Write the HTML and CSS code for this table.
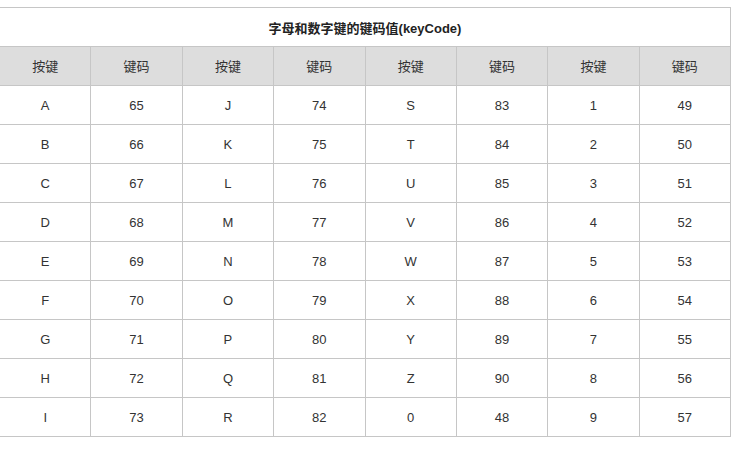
FILE: index.html
```html
<!DOCTYPE html>
<html>
<head>
<meta charset="utf-8">
<link rel="stylesheet" href="styles.css">
</head>
<body>
<table class="keys">
<thead>
<tr><th class="title" colspan="8">字母和数字键的键码值(keyCode)</th></tr>
<tr class="head"><td>按键</td><td>键码</td><td>按键</td><td>键码</td><td>按键</td><td>键码</td><td>按键</td><td>键码</td></tr>
</thead>
<tbody>
<tr><td>A</td><td>65</td><td>J</td><td>74</td><td>S</td><td>83</td><td>1</td><td>49</td></tr>
<tr><td>B</td><td>66</td><td>K</td><td>75</td><td>T</td><td>84</td><td>2</td><td>50</td></tr>
<tr><td>C</td><td>67</td><td>L</td><td>76</td><td>U</td><td>85</td><td>3</td><td>51</td></tr>
<tr><td>D</td><td>68</td><td>M</td><td>77</td><td>V</td><td>86</td><td>4</td><td>52</td></tr>
<tr><td>E</td><td>69</td><td>N</td><td>78</td><td>W</td><td>87</td><td>5</td><td>53</td></tr>
<tr><td>F</td><td>70</td><td>O</td><td>79</td><td>X</td><td>88</td><td>6</td><td>54</td></tr>
<tr><td>G</td><td>71</td><td>P</td><td>80</td><td>Y</td><td>89</td><td>7</td><td>55</td></tr>
<tr><td>H</td><td>72</td><td>Q</td><td>81</td><td>Z</td><td>90</td><td>8</td><td>56</td></tr>
<tr><td>I</td><td>73</td><td>R</td><td>82</td><td>0</td><td>48</td><td>9</td><td>57</td></tr>
</tbody>
</table>
</body>
</html>
```
FILE: styles.css
```css
html, body {
  margin: 0;
  padding: 0;
  background: #fff;
}
body {
  font-family: "Liberation Sans", Arial, "Noto Sans CJK SC", sans-serif;
  font-size: 13px;
  color: #333;
}
.keys {
  margin: 7px 0 0 -1px;
  width: 732px;
  border-collapse: collapse;
  table-layout: fixed;
}
.keys th,
.keys td {
  border: 1px solid #c6c6c6;
  height: 38px;
  padding: 0;
  text-align: center;
  vertical-align: middle;
}
.keys .title {
  font-weight: bold;
  font-size: 13px;
  color: #222;
}
.keys .head td {
  background: #dddddd;
  height: 36px;
  padding-bottom: 2px;
}
```
